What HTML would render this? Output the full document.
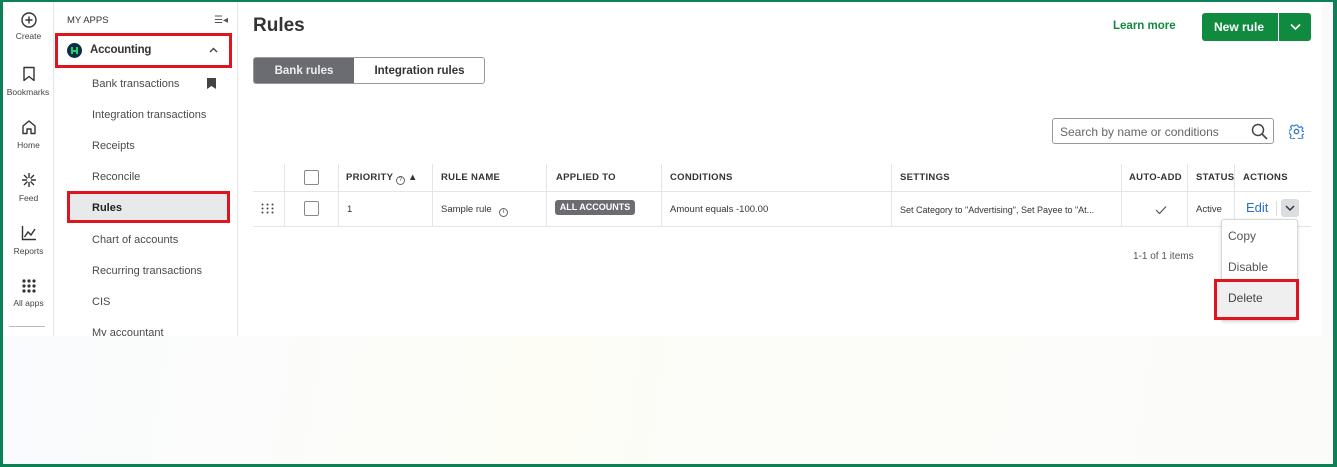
<!DOCTYPE html>
<html><head><meta charset="utf-8"><style>
*{box-sizing:border-box;margin:0;padding:0}
body{width:1337px;height:467px;position:relative;overflow:hidden;font-family:"Liberation Sans",sans-serif;background:#fff}
.a{position:absolute}
.frame{left:0;top:0;width:1337px;height:467px;border:3px solid #0d8155;border-top-width:2px;border-right-width:4px;pointer-events:none;z-index:10}
.bottom{left:3px;top:336px;width:1330px;height:128px;background:linear-gradient(100deg,#fafbfc 0%,#fbfcfb 20%,#fdfdf6 40%,#fcfcf9 60%,#fbfbfa 100%)}
.rail{left:3px;top:2px;width:51px;height:334px;border-right:1px solid #e3e5e8;text-align:center;font-size:8.5px;color:#444}
.ri{position:absolute;left:0;width:51px}
.side{left:55px;top:2px;width:183px;height:334px;border-right:1px solid #e3e5e8}
.nav{position:absolute;left:37px;font-size:11px;color:#4a4a4a}
.th{position:absolute;top:172px;font-size:9.5px;font-weight:bold;color:#333;letter-spacing:.3px}
.td{position:absolute;top:204px;font-size:9.5px;color:#333}
.vl{position:absolute;width:1px;background:#e3e5e8}
.cb{position:absolute;left:304px;width:15px;height:15px;border:1px solid #888;border-radius:2px;background:#fff}
</style></head><body>
<div class="a bottom"></div>
<div class="a" style="left:1322px;top:2px;width:11px;height:334px;background:#fbf9f9"></div>

<div class="a rail">
 <div class="ri" style="top:10px"><svg width="16" height="16" viewBox="0 0 16 16"><circle cx="8" cy="8" r="7" fill="none" stroke="#333" stroke-width="1.4"/><path d="M8 4.5v7M4.5 8h7" stroke="#333" stroke-width="1.4"/></svg><div style="margin-top:1px">Create</div></div>
 <div class="ri" style="top:64px"><svg width="14" height="16" viewBox="0 0 14 16"><path d="M2 1.5h10v13l-5-4-5 4z" fill="none" stroke="#333" stroke-width="1.4" stroke-linejoin="round"/></svg><div style="margin-top:3px;margin-left:-4px;width:58px">Bookmarks</div></div>
 <div class="ri" style="top:117px"><svg width="16" height="16" viewBox="0 0 16 16"><path d="M2 7l6-5 6 5v7.5H10V10H6v4.5H2z" fill="none" stroke="#333" stroke-width="1.4" stroke-linejoin="round"/></svg><div style="margin-top:3px">Home</div></div>
 <div class="ri" style="top:170px"><svg width="16" height="16" viewBox="0 0 16 16"><path d="M8 1v5M8 10v5M1 8h5M10 8h5M3 3l3.5 3.5M9.5 9.5L13 13M13 3L9.5 6.5M6.5 9.5L3 13" stroke="#333" stroke-width="1.4"/></svg><div style="margin-top:3px">Feed</div></div>
 <div class="ri" style="top:223px"><svg width="16" height="16" viewBox="0 0 16 16"><path d="M1.5 1v13.5H15M3.5 12L7 7l3 3 4-6" fill="none" stroke="#333" stroke-width="1.4"/></svg><div style="margin-top:3px">Reports</div></div>
 <div class="ri" style="top:277px"><svg width="14" height="14" viewBox="0 0 14 14" fill="#333"><circle cx="2" cy="2" r="1.6"/><circle cx="7" cy="2" r="1.6"/><circle cx="12" cy="2" r="1.6"/><circle cx="2" cy="7" r="1.6"/><circle cx="7" cy="7" r="1.6"/><circle cx="12" cy="7" r="1.6"/><circle cx="2" cy="12" r="1.6"/><circle cx="7" cy="12" r="1.6"/><circle cx="12" cy="12" r="1.6"/></svg><div style="margin-top:3px">All apps</div></div>
 <div class="ri" style="top:324px;left:6px;width:36px;height:1px;background:#bbb"></div>
</div>

<div class="a side">
 <div class="a" style="left:12px;top:13px;font-size:9.5px;color:#333">MY APPS</div>
 <div class="a" style="left:159px;top:13px;font-size:10px;color:#555">☰◂</div>
 <div class="a" style="left:0;top:31px;width:177px;height:35px;border:3px solid #e0141e"></div>
 <div class="a" style="left:12px;top:41px;width:15px;height:15px;border-radius:50%;background:#0c2e46"><div style="position:absolute;left:4px;top:4px;width:7px;height:7px;border-left:2px solid #1fd36b;border-right:2px solid #1fd36b"><div style="margin-top:2.5px;height:2px;background:#1fd36b"></div></div></div>
 <div class="a" style="left:35px;top:42px;font-size:11.5px;color:#333;font-weight:bold;letter-spacing:-.2px">Accounting</div>
 <svg class="a" style="left:154px;top:45px" width="9" height="6" viewBox="0 0 9 6"><path d="M1 5l3.5-3.5L8 5" fill="none" stroke="#444" stroke-width="1.4"/></svg>
 <div class="nav" style="top:76px">Bank transactions</div>
 <svg class="a" style="left:152px;top:76px" width="9" height="11" viewBox="0 0 9 11"><path d="M0 0h9v11L4.5 8 0 11z" fill="#444"/></svg>
 <div class="nav" style="top:107px">Integration transactions</div>
 <div class="nav" style="top:138px">Receipts</div>
 <div class="nav" style="top:169px">Reconcile</div>
 <div class="a" style="left:12px;top:189px;width:163px;height:32px;background:#e8e9eb;border:3px solid #e0141e"></div>
 <div class="nav" style="top:200px;font-weight:bold;color:#222">Rules</div>
 <div class="nav" style="top:232px">Chart of accounts</div>
 <div class="nav" style="top:263px">Recurring transactions</div>
 <div class="nav" style="top:294px">CIS</div>
 <div class="nav" style="top:325px;height:9px;overflow:hidden">My accountant</div>
</div>

<div class="a" style="left:253px;top:15px;font-size:19px;font-weight:bold;color:#333">Rules</div>
<div class="a" style="left:253px;top:57px;width:232px;height:27px;border:1px solid #999;border-radius:3px;overflow:hidden;font-size:11.5px;font-weight:bold">
 <div class="a" style="left:0;top:0;width:100px;height:27px;background:#6b6c72;color:#eee;text-align:center;line-height:26px">Bank rules</div>
 <div class="a" style="left:100px;top:0;width:131px;height:27px;color:#333;text-align:center;line-height:26px">Integration rules</div>
</div>

<div class="a" style="left:1113px;top:20px;font-size:11.5px;font-weight:bold;color:#108a3e">Learn more</div>
<div class="a" style="left:1202px;top:13px;width:109px;height:28px;background:#108a3e;border-radius:3px;color:#fff;font-size:12px;font-weight:bold">
 <div class="a" style="left:12px;top:7px">New rule</div>
 <div class="a" style="left:76px;top:0;width:1px;height:28px;background:#fff"></div>
 <svg class="a" style="left:88px;top:10px" width="11" height="8" viewBox="0 0 11 8"><path d="M1 1.5l4.5 4.5 4.5-4.5" fill="none" stroke="#fff" stroke-width="1.6"/></svg>
</div>

<div class="a" style="left:1052px;top:118px;width:222px;height:26px;border:1px solid #999;border-radius:3px">
 <div class="a" style="left:7px;top:6px;font-size:12px;color:#666">Search by name or conditions</div>
 <svg class="a" style="left:198px;top:4px" width="17" height="17" viewBox="0 0 17 17"><circle cx="7" cy="7" r="5.5" fill="none" stroke="#444" stroke-width="1.5"/><path d="M11 11l5 5" stroke="#444" stroke-width="1.6"/></svg>
</div>
<svg class="a" style="left:1289px;top:124px" width="15" height="15" viewBox="0 0 15 15"><circle cx="7.5" cy="7.5" r="2.2" fill="none" stroke="#2a7ad4" stroke-width="1.3"/><path d="M6.3 1h2.4l.4 1.8 1.5.7 1.6-1 1.7 1.7-1 1.6.7 1.5 1.8.4v2.4l-1.8.4-.7 1.5 1 1.6-1.7 1.7-1.6-1-1.5.7-.4 1.8H6.3l-.4-1.8-1.5-.7-1.6 1-1.7-1.7 1-1.6-.7-1.5L0 8.7V6.3l1.8-.4.7-1.5-1-1.6 1.7-1.7 1.6 1 1.5-.7z" fill="none" stroke="#2a7ad4" stroke-width="1.1" stroke-linejoin="round"/></svg>

<!-- table -->
<div class="a" style="left:253px;top:191px;width:1058px;height:1px;background:#e3e5e8"></div>
<div class="a" style="left:253px;top:226px;width:1058px;height:1px;background:#e3e5e8"></div>
<div class="vl" style="left:284px;top:164px;height:62px"></div>
<div class="vl" style="left:338px;top:164px;height:62px"></div>
<div class="vl" style="left:432px;top:164px;height:62px"></div>
<div class="vl" style="left:546px;top:164px;height:62px"></div>
<div class="vl" style="left:661px;top:164px;height:62px"></div>
<div class="vl" style="left:891px;top:164px;height:62px"></div>
<div class="vl" style="left:1121px;top:164px;height:62px"></div>
<div class="vl" style="left:1187px;top:164px;height:62px"></div>
<div class="vl" style="left:1234px;top:164px;height:62px"></div>
<div class="cb" style="top:170px"></div>
<div class="cb" style="top:201px"></div>
<svg class="a" style="left:261px;top:203px" width="13" height="11" viewBox="0 0 13 11" fill="#444"><circle cx="1.5" cy="1.5" r="1"/><circle cx="6.5" cy="1.5" r="1"/><circle cx="11.5" cy="1.5" r="1"/><circle cx="1.5" cy="5.5" r="1"/><circle cx="6.5" cy="5.5" r="1"/><circle cx="11.5" cy="5.5" r="1"/><circle cx="1.5" cy="9.5" r="1"/><circle cx="6.5" cy="9.5" r="1"/><circle cx="11.5" cy="9.5" r="1"/></svg>
<div class="th" style="left:346px">PRIORITY <span style="display:inline-block;width:9px;height:9px;border:1px solid #666;border-radius:50%;font-size:6px;text-align:center;line-height:7px;font-weight:normal;vertical-align:-1px">?</span> ▲</div>
<div class="th" style="left:441px">RULE NAME</div>
<div class="th" style="left:556px">APPLIED TO</div>
<div class="th" style="left:670px">CONDITIONS</div>
<div class="th" style="left:900px">SETTINGS</div>
<div class="th" style="left:1129px">AUTO-ADD</div>
<div class="th" style="left:1196px">STATUS</div>
<div class="th" style="left:1243px">ACTIONS</div>
<div class="td" style="left:347px">1</div>
<div class="td" style="left:441px">Sample rule <span style="display:inline-block;width:9px;height:9px;border:1px solid #666;border-radius:50%;font-size:6px;text-align:center;line-height:7px;margin-left:5px;vertical-align:-1px">i</span></div>
<div class="a" style="left:555px;top:200px;width:80px;height:15px;background:#6b6c72;border-radius:3px;color:#fff;font-size:9px;font-weight:bold;text-align:center;line-height:15px">ALL ACCOUNTS</div>
<div class="td" style="left:670px">Amount equals -100.00</div>
<div class="td" style="left:900px;font-size:9px;top:205px">Set Category to "Advertising", Set Payee to "At...</div>
<svg class="a" style="left:1155px;top:205px" width="12" height="10" viewBox="0 0 12 10"><path d="M1 5l3.5 3.5L11 1.5" fill="none" stroke="#555" stroke-width="1.2"/></svg>
<div class="td" style="left:1196px">Active</div>
<div class="a" style="left:1246px;top:200px;font-size:13px;color:#2a6fc4">Edit</div>
<div class="a" style="left:1276px;top:201px;width:1px;height:15px;background:#ddd"></div>
<div class="a" style="left:1281px;top:199px;width:18px;height:18px;background:#dcdde0;border-radius:3px"><svg class="a" style="left:4px;top:6px" width="10" height="7" viewBox="0 0 10 7"><path d="M1 1l4 4 4-4" fill="none" stroke="#333" stroke-width="1.5"/></svg></div>
<div class="a" style="left:1133px;top:251px;font-size:10px;color:#555">1-1 of 1 items</div>

<div class="a" style="left:1221px;top:219px;width:77px;height:102px;background:#fff;border:1px solid #d8d8d8;border-radius:3px;box-shadow:0 1px 3px rgba(0,0,0,.15)"></div>
<div class="a" style="left:1228px;top:229px;font-size:12px;color:#555">Copy</div>
<div class="a" style="left:1228px;top:260px;font-size:12px;color:#555">Disable</div>
<div class="a" style="left:1214px;top:279px;width:85px;height:41px;border:3px solid #e0141e;background:#efefef"></div>
<div class="a" style="left:1228px;top:291px;font-size:12px;color:#444">Delete</div>

<div class="a frame"></div>
</body></html>
